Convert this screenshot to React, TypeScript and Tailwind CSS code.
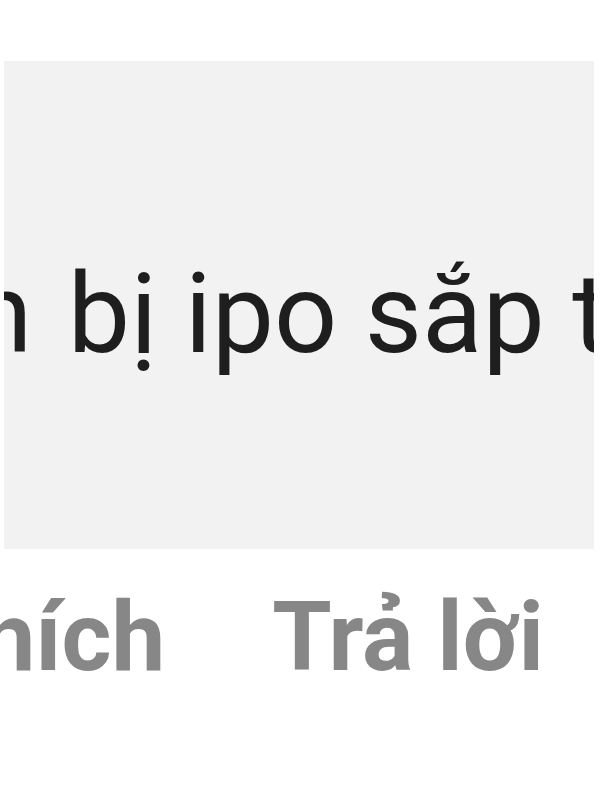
export default function App() {
  return (
    <div className="w-[600px] h-[800px] bg-white overflow-hidden font-['Roboto','Noto_Sans',sans-serif]">
      <div className="pt-[61px] pl-[4px] w-[594px]">
        <div className="h-[488px] bg-[#f2f2f2] overflow-hidden">
          <div className="pt-[198px] -ml-[288px] whitespace-nowrap text-[111px] leading-none text-[#1e1e1e]">
            <span className="mr-[8px]">Chuẩn</span> bị ipo sắp tới
          </div>
        </div>
      </div>
      <div className="mt-[40px] flex whitespace-nowrap text-[96px] leading-none font-bold text-[#878787]">
        <span className="-ml-[78px]">Thích</span>
        <span className="ml-[107px]">Trả lời</span>
      </div>
    </div>
  );
}
